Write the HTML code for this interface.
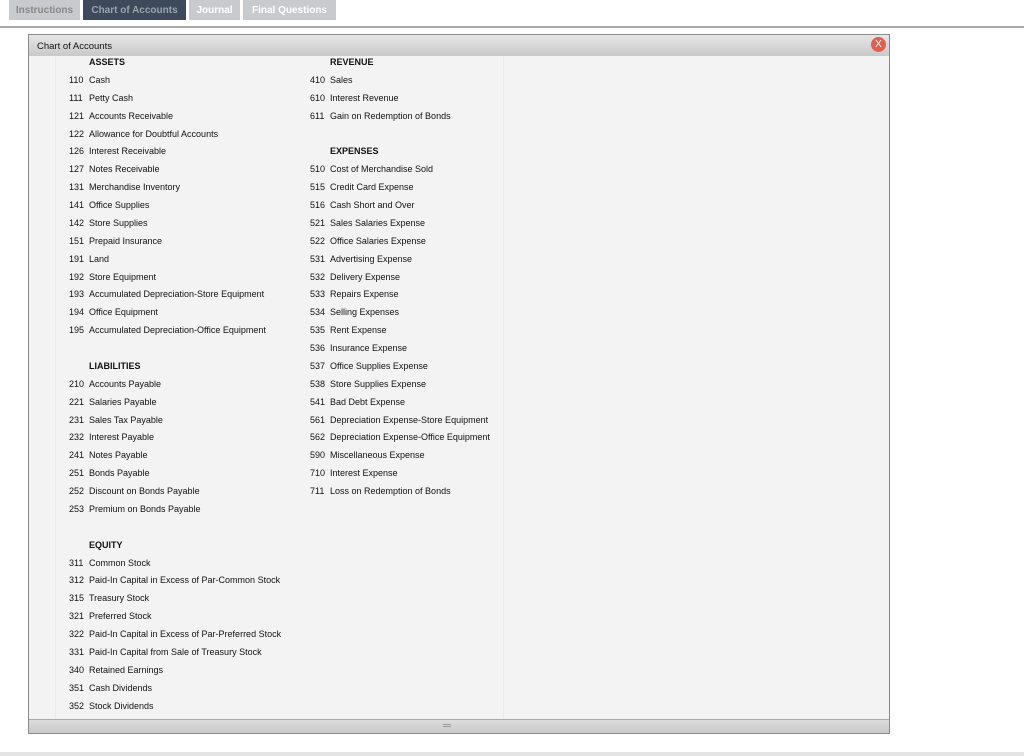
<!DOCTYPE html>
<html><head><meta charset="utf-8"><style>
*{margin:0;padding:0;box-sizing:border-box}
body{width:1024px;height:756px;background:#fff;font-family:"Liberation Sans",sans-serif;position:relative;overflow:hidden}
.tab{position:absolute;top:0;height:20px;background:#c8cbcd;color:#fff;font-size:10px;font-weight:bold;line-height:21px;text-align:center}
#line{position:absolute;top:26px;left:0;width:1024px;height:2px;background:#a9a9a9}
#panel{position:absolute;left:28px;top:34px;width:862px;height:700px;border:1px solid #8a8a8a;background:#f2f3f2}
#hdr{position:absolute;left:0;top:0;width:100%;height:21px;background:linear-gradient(#e6e6e6,#c9c9c9);font-size:9.5px;line-height:24px;padding-left:8px;color:#111}
#x{position:absolute;right:3px;top:2px;width:15px;height:15px;border-radius:50%;background:#e0604f;color:#fff;font-size:10px;line-height:15px;text-align:center}
#ftr{position:absolute;left:0;bottom:0;width:100%;height:14px;background:linear-gradient(#dcdcdc,#c9c9c9);border-top:1px solid #aaa}
.v{position:absolute;top:21px;bottom:14px;width:1px;background:#e8eae8}
.col{position:absolute;font-size:9px;color:#111}
.r{height:17.89px;line-height:17.89px;white-space:nowrap}
.r b{font-weight:bold;padding-left:20px}
.r span{display:inline-block;width:20px}
</style></head><body>
<div class="tab" style="left:9px;width:71px;color:#888">Instructions</div>
<div class="tab" style="left:83px;width:103px;background:#3d4a5c;color:#9aa3ad">Chart of Accounts</div>
<div class="tab" style="left:189px;width:51px">Journal</div>
<div class="tab" style="left:243px;width:93px">Final Questions</div>
<div id="line"></div>
<div id="panel">
<div id="hdr">Chart of Accounts<div id="x">X</div></div>
<div class="v" style="left:26px"></div>
<div class="v" style="left:474px"></div>
<div id="ftr"><div style="position:absolute;left:414px;top:4px;width:8px;height:3px;border-top:1px solid #999;border-bottom:1px solid #999"></div></div>
<div class="col" style="left:40px;top:19px">
<div class="r"><b>ASSETS</b></div>
<div class="r"><span>110</span>Cash</div>
<div class="r"><span>111</span>Petty Cash</div>
<div class="r"><span>121</span>Accounts Receivable</div>
<div class="r"><span>122</span>Allowance for Doubtful Accounts</div>
<div class="r"><span>126</span>Interest Receivable</div>
<div class="r"><span>127</span>Notes Receivable</div>
<div class="r"><span>131</span>Merchandise Inventory</div>
<div class="r"><span>141</span>Office Supplies</div>
<div class="r"><span>142</span>Store Supplies</div>
<div class="r"><span>151</span>Prepaid Insurance</div>
<div class="r"><span>191</span>Land</div>
<div class="r"><span>192</span>Store Equipment</div>
<div class="r"><span>193</span>Accumulated Depreciation-Store Equipment</div>
<div class="r"><span>194</span>Office Equipment</div>
<div class="r"><span>195</span>Accumulated Depreciation-Office Equipment</div>
<div class="r"></div>
<div class="r"><b>LIABILITIES</b></div>
<div class="r"><span>210</span>Accounts Payable</div>
<div class="r"><span>221</span>Salaries Payable</div>
<div class="r"><span>231</span>Sales Tax Payable</div>
<div class="r"><span>232</span>Interest Payable</div>
<div class="r"><span>241</span>Notes Payable</div>
<div class="r"><span>251</span>Bonds Payable</div>
<div class="r"><span>252</span>Discount on Bonds Payable</div>
<div class="r"><span>253</span>Premium on Bonds Payable</div>
<div class="r"></div>
<div class="r"><b>EQUITY</b></div>
<div class="r"><span>311</span>Common Stock</div>
<div class="r"><span>312</span>Paid-In Capital in Excess of Par-Common Stock</div>
<div class="r"><span>315</span>Treasury Stock</div>
<div class="r"><span>321</span>Preferred Stock</div>
<div class="r"><span>322</span>Paid-In Capital in Excess of Par-Preferred Stock</div>
<div class="r"><span>331</span>Paid-In Capital from Sale of Treasury Stock</div>
<div class="r"><span>340</span>Retained Earnings</div>
<div class="r"><span>351</span>Cash Dividends</div>
<div class="r"><span>352</span>Stock Dividends</div>
</div>
<div class="col" style="left:281px;top:19px">
<div class="r"><b>REVENUE</b></div>
<div class="r"><span>410</span>Sales</div>
<div class="r"><span>610</span>Interest Revenue</div>
<div class="r"><span>611</span>Gain on Redemption of Bonds</div>
<div class="r"></div>
<div class="r"><b>EXPENSES</b></div>
<div class="r"><span>510</span>Cost of Merchandise Sold</div>
<div class="r"><span>515</span>Credit Card Expense</div>
<div class="r"><span>516</span>Cash Short and Over</div>
<div class="r"><span>521</span>Sales Salaries Expense</div>
<div class="r"><span>522</span>Office Salaries Expense</div>
<div class="r"><span>531</span>Advertising Expense</div>
<div class="r"><span>532</span>Delivery Expense</div>
<div class="r"><span>533</span>Repairs Expense</div>
<div class="r"><span>534</span>Selling Expenses</div>
<div class="r"><span>535</span>Rent Expense</div>
<div class="r"><span>536</span>Insurance Expense</div>
<div class="r"><span>537</span>Office Supplies Expense</div>
<div class="r"><span>538</span>Store Supplies Expense</div>
<div class="r"><span>541</span>Bad Debt Expense</div>
<div class="r"><span>561</span>Depreciation Expense-Store Equipment</div>
<div class="r"><span>562</span>Depreciation Expense-Office Equipment</div>
<div class="r"><span>590</span>Miscellaneous Expense</div>
<div class="r"><span>710</span>Interest Expense</div>
<div class="r"><span>711</span>Loss on Redemption of Bonds</div>
</div>
</div>
<div style="position:absolute;left:0;top:752px;width:1024px;height:4px;background:#e4e4e4"></div>
</body></html>
